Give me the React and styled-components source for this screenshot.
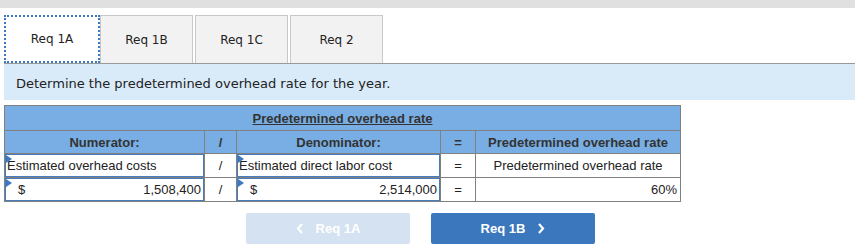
import React from "react";
import styled, { createGlobalStyle } from "styled-components";

const Global = createGlobalStyle`
    body {
        margin: 0;
        background: #fff;
        font-family: "Liberation Sans", Arial, sans-serif;
    }
`;

const Page = styled.div`
    width: 867px;
`;

const TopBar = styled.div`
    width: 855px;
    height: 8px;
    background: #e0e0e0;
`;

const TabRow = styled.div`
    display: flex;
    gap: 2px;
    margin: 7px 0 0 4px;
    width: 851px;
    border-bottom: 1px solid #999;
`;

const Tab = styled.div`
    width: ${(p) => (p.$active ? "96px" : "93px")};
    height: 48px;
    box-sizing: border-box;
    display: flex;
    align-items: center;
    justify-content: center;
    font-family: "DejaVu Sans", Verdana, sans-serif;
    font-size: 12px;
    color: #222;
    background: ${(p) => (p.$active ? "#fff" : "#f2f2f2")};
    border: ${(p) => (p.$active ? "2px dotted #3b78c2" : "1px solid #c8c8c8")};
    border-bottom: ${(p) => (p.$active ? "2px dotted #3b78c2" : "none")};
    margin-bottom: ${(p) => (p.$active ? "-1px" : "0")};
    margin-right: ${(p) => (p.$active ? "-2px" : "0")};
`;

const Info = styled.div`
    margin-left: 4px;
    width: 851px;
    height: 36px;
    background: #d9ebf9;
    display: flex;
    align-items: center;
    padding: 2px 0 0 12px;
    box-sizing: border-box;
    font-family: "DejaVu Sans", Verdana, sans-serif;
    font-size: 13px;
    color: #222;
`;

const Table = styled.table`
    margin: 5px 0 0 4px;
    width: 676px;
    border-collapse: collapse;
    table-layout: fixed;
    font-size: 13px;
    color: #222;
`;

const Th = styled.th`
    background: #78aee3;
    border: 1px solid #808080;
    height: ${(p) => (p.$tall ? "24px" : "22px")};
    padding: 0;
    font-weight: bold;
    color: #333;
    text-align: center;
`;

const Title = styled.span`
    text-decoration: underline;
`;

const Td = styled.td`
    border: 1px solid #808080;
    height: 23px;
    padding: 0;
    text-align: ${(p) => p.$align || "center"};
    padding-right: ${(p) => (p.$align === "right" ? "3px" : "0")};
`;

const InputCell = styled.td`
    border: 1px solid #808080;
    padding: 0;
    height: 23px;
    position: relative;
`;

const Field = styled.div`
    height: 23px;
    box-sizing: border-box;
    border: 1px solid #4a7cbc;
    display: flex;
    align-items: center;
    justify-content: space-between;
    padding: 0 2px 0 ${(p) => (p.$money ? "12px" : "1px")};
    background: #fff;

    &::before {
        content: "";
        position: absolute;
        top: 1px;
        left: 1px;
        border-top: 4px solid transparent;
        border-bottom: 4px solid transparent;
        border-left: 6px solid #3b78c2;
    }
`;

const Buttons = styled.div`
    display: flex;
    gap: 21px;
    margin: 11px 0 0 246px;
`;

const NavButton = styled.button`
    width: 164px;
    height: 31px;
    border: none;
    border-radius: 2px;
    background: ${(p) => (p.$disabled ? "#d5e2f1" : "#3a77bd")};
    color: #fff;
    font-family: "Liberation Sans", Arial, sans-serif;
    font-weight: bold;
    font-size: 13px;
    display: flex;
    align-items: center;
    justify-content: center;
    gap: 12px;
`;

const Chevron = ({ dir }) => (
    <svg width="8" height="11" viewBox="0 0 8 11">
        <path
            d={dir === "left" ? "M6 1 L2 5.5 L6 10" : "M2 1 L6 5.5 L2 10"}
            fill="none"
            stroke="#fff"
            strokeWidth="2.2"
        />
    </svg>
);

const App = () => (
    <Page>
        <Global />
        <TopBar />
        <TabRow>
            <Tab $active>Req 1A</Tab>
            <Tab>Req 1B</Tab>
            <Tab>Req 1C</Tab>
            <Tab>Req 2</Tab>
        </TabRow>
        <Info>Determine the predetermined overhead rate for the year.</Info>
        <Table>
            <colgroup>
                <col style={{ width: 200 }} />
                <col style={{ width: 32 }} />
                <col style={{ width: 204 }} />
                <col style={{ width: 35 }} />
                <col style={{ width: 205 }} />
            </colgroup>
            <thead>
                <tr>
                    <Th colSpan={5} $tall>
                        <Title>Predetermined overhead rate</Title>
                    </Th>
                </tr>
                <tr>
                    <Th>Numerator:</Th>
                    <Th>/</Th>
                    <Th>Denominator:</Th>
                    <Th>=</Th>
                    <Th>Predetermined overhead rate</Th>
                </tr>
            </thead>
            <tbody>
                <tr>
                    <InputCell>
                        <Field>Estimated overhead costs</Field>
                    </InputCell>
                    <Td>/</Td>
                    <InputCell>
                        <Field>Estimated direct labor cost</Field>
                    </InputCell>
                    <Td>=</Td>
                    <Td>Predetermined overhead rate</Td>
                </tr>
                <tr>
                    <InputCell>
                        <Field $money>
                            <span>$</span>
                            <span>1,508,400</span>
                        </Field>
                    </InputCell>
                    <Td>/</Td>
                    <InputCell>
                        <Field $money>
                            <span>$</span>
                            <span>2,514,000</span>
                        </Field>
                    </InputCell>
                    <Td>=</Td>
                    <Td $align="right">60%</Td>
                </tr>
            </tbody>
        </Table>
        <Buttons>
            <NavButton $disabled>
                <Chevron dir="left" />
                Req 1A
            </NavButton>
            <NavButton>
                Req 1B
                <Chevron dir="right" />
            </NavButton>
        </Buttons>
    </Page>
);

export default App;
